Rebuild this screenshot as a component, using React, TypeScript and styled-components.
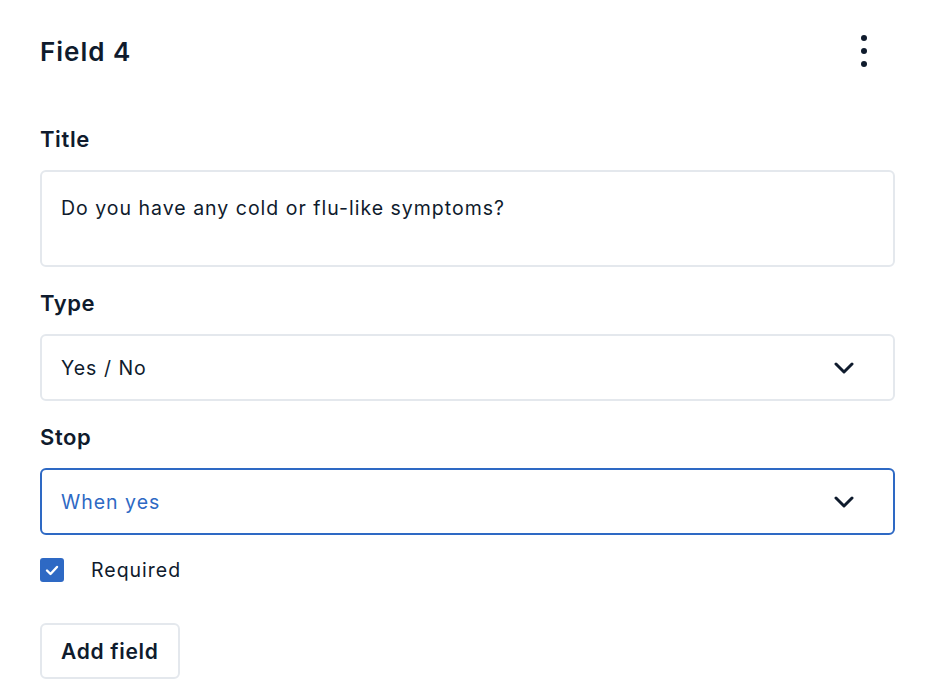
import styled, { createGlobalStyle } from 'styled-components';

const GlobalStyle = createGlobalStyle`
	body {
		margin: 0;
		background: #ffffff;
		font-family: Inter, 'Noto Sans', sans-serif;
		color: #0f1b2d;
	}
`;

const Panel = styled.div`
	padding: 33px 41px 20px 40px;
	display: flex;
	flex-direction: column;
`;

const Header = styled.div`
	display: flex;
	justify-content: space-between;
	align-items: center;
	height: 36px;
	margin-bottom: 56px;

	h1 {
		margin: 0;
		font-size: 26px;
		font-weight: 600;
		letter-spacing: 1px;
	}
`;

const MenuButton = styled.button`
	border: none;
	background: transparent;
	padding: 0;
	width: 24px;
	height: 36px;
	margin-right: 19px;
	display: flex;
	align-items: center;
	justify-content: center;
	color: #0f1b2d;
	cursor: pointer;
`;

const Group = styled.div`
	display: flex;
	flex-direction: column;
	margin-bottom: 22px;
`;

const Label = styled.label`
	font-size: 22px;
	font-weight: 600;
	line-height: 28px;
	letter-spacing: 0.6px;
	margin-bottom: 17px;
`;

const TextArea = styled.div`
	height: 97px;
	box-sizing: border-box;
	border: 2px solid #e4e8ed;
	border-radius: 6px;
	padding: 24px 19px;
	font-size: 19.5px;
	letter-spacing: 1px;
	line-height: 24px;
`;

const Select = styled.div<{ $focused?: boolean }>`
	height: 67px;
	box-sizing: border-box;
	border: 2px solid ${(p) => (p.$focused ? '#2e69c4' : '#e4e8ed')};
	border-radius: 6px;
	padding: 0 39px 0 19px;
	display: flex;
	align-items: center;
	justify-content: space-between;
	font-size: 19.5px;
	letter-spacing: 1px;
	color: ${(p) => (p.$focused ? '#2e69c4' : '#0f1b2d')};

	svg {
		color: #0f1b2d;
	}
`;

const CheckRow = styled.div`
	display: flex;
	align-items: center;
	margin-top: 1px;
	gap: 27px;
	font-size: 19.5px;
	letter-spacing: 1px;
`;

const Checkbox = styled.span`
	width: 24px;
	height: 24px;
	border-radius: 3px;
	background: #2e69c4;
	display: flex;
	align-items: center;
	justify-content: center;
`;

const AddButton = styled.button`
	align-self: flex-start;
	margin-top: 41px;
	height: 56px;
	padding: 0 19px;
	border: 2px solid #e4e8ed;
	border-radius: 6px;
	background: #fff;
	font-family: inherit;
	font-size: 21px;
	font-weight: 600;
	letter-spacing: 0.7px;
	color: #0f1b2d;
`;

function Chevron() {
	return (
		<svg width="20" height="12" viewBox="0 0 20 12" fill="none">
			<path
				d="M2 2l8 8 8-8"
				stroke="currentColor"
				strokeWidth="3"
				strokeLinecap="round"
				strokeLinejoin="round"
			/>
		</svg>
	);
}

export default function App() {
	return (
		<>
			<GlobalStyle />
			<Panel>
				<Header>
					<h1>Field 4</h1>
					<MenuButton type="button">
						<svg width="8" height="34" viewBox="0 0 8 34" fill="currentColor">
							<circle cx="4" cy="4" r="3" />
							<circle cx="4" cy="17" r="3" />
							<circle cx="4" cy="30" r="3" />
						</svg>
					</MenuButton>
				</Header>

				<Group>
					<Label>Title</Label>
					<TextArea>Do you have any cold or flu-like symptoms?</TextArea>
				</Group>

				<Group>
					<Label>Type</Label>
					<Select>
						<span>Yes / No</span>
						<Chevron />
					</Select>
				</Group>

				<Group>
					<Label>Stop</Label>
					<Select $focused>
						<span>When yes</span>
						<Chevron />
					</Select>
				</Group>

				<CheckRow>
					<Checkbox>
						<svg width="14" height="11" viewBox="0 0 14 11" fill="none">
							<path
								d="M2 5.5l3.5 3.5L12 2"
								stroke="#fff"
								strokeWidth="2.4"
								strokeLinecap="round"
								strokeLinejoin="round"
							/>
						</svg>
					</Checkbox>
					<span>Required</span>
				</CheckRow>

				<AddButton type="button">Add field</AddButton>
			</Panel>
		</>
	);
}
